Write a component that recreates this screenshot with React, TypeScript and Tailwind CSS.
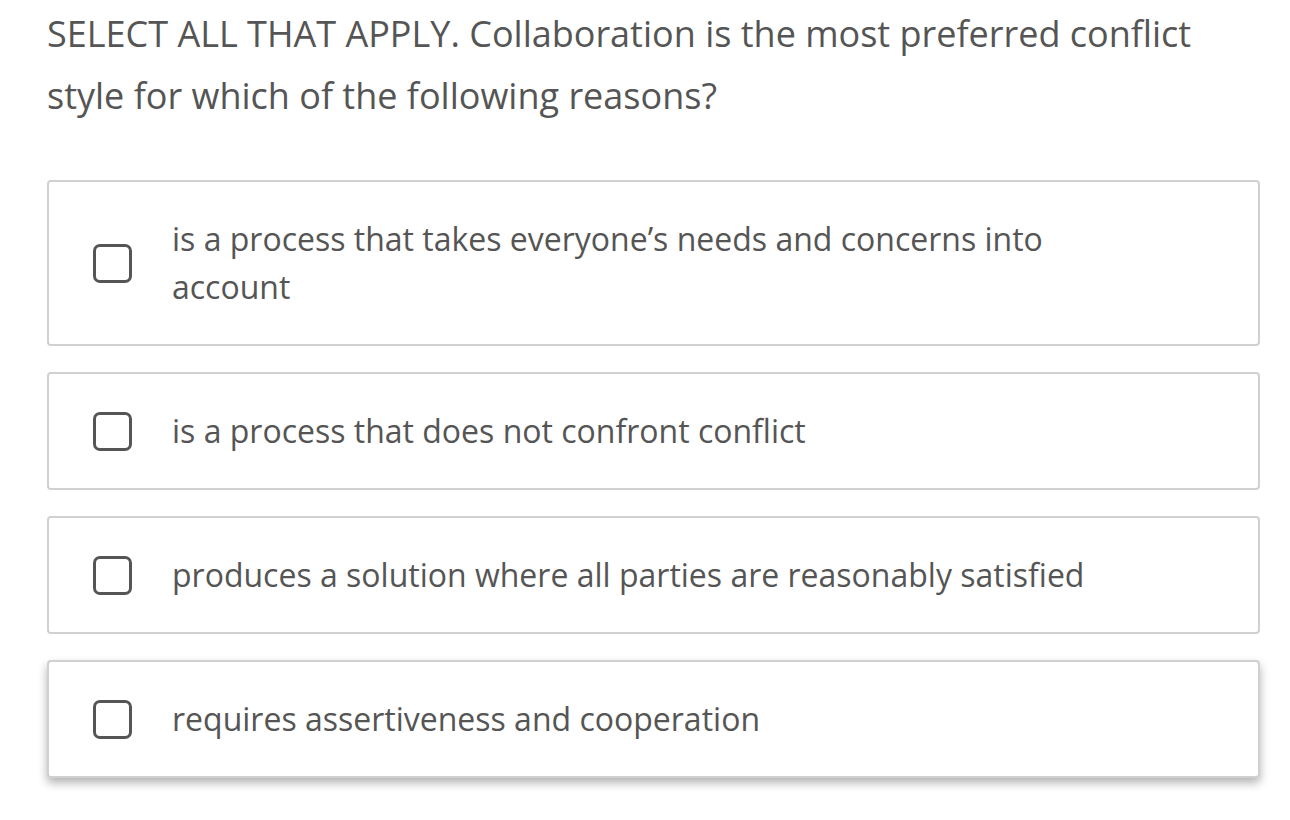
import React from "react";

const options = [
  "is a process that takes everyone\u2019s needs and concerns into account",
  "is a process that does not confront conflict",
  "produces a solution where all parties are reasonably satisfied",
  "requires assertiveness and cooperation",
];

function Option({ label, raised }: { label: string; raised?: boolean }) {
  return (
    <label
      className={
        "flex items-center rounded-[4px] border-2 border-[#d0d0d0] bg-white py-[33px] pl-[44px] pr-[155px] " +
        (raised ? "shadow-[0_5px_10px_rgba(0,0,0,0.3)]" : "")
      }
    >
      <span className="h-[39px] w-[39px] shrink-0 rounded-[7px] border-[3px] border-[#555555]" />
      <span className="ml-[40px] text-[32px] leading-[48px] text-[#555555]">{label}</span>
    </label>
  );
}

export default function App() {
  return (
    <div
      className="min-h-[820px] w-[1290px] bg-white pl-[47px] pr-[30px] pt-[3px]"
      style={{ fontFamily: '"Open Sans", sans-serif' }}
    >
      <h1 className="max-w-[1200px] text-[36px] font-normal leading-[62px] text-[#555555]">
        SELECT ALL THAT APPLY. Collaboration is the most preferred conflict style for which of the following reasons?
      </h1>
      <div className="mt-[53px] flex flex-col gap-[26px]">
        {options.map((o, i) => (
          <Option key={o} label={o} raised={i === options.length - 1} />
        ))}
      </div>
    </div>
  );
}
